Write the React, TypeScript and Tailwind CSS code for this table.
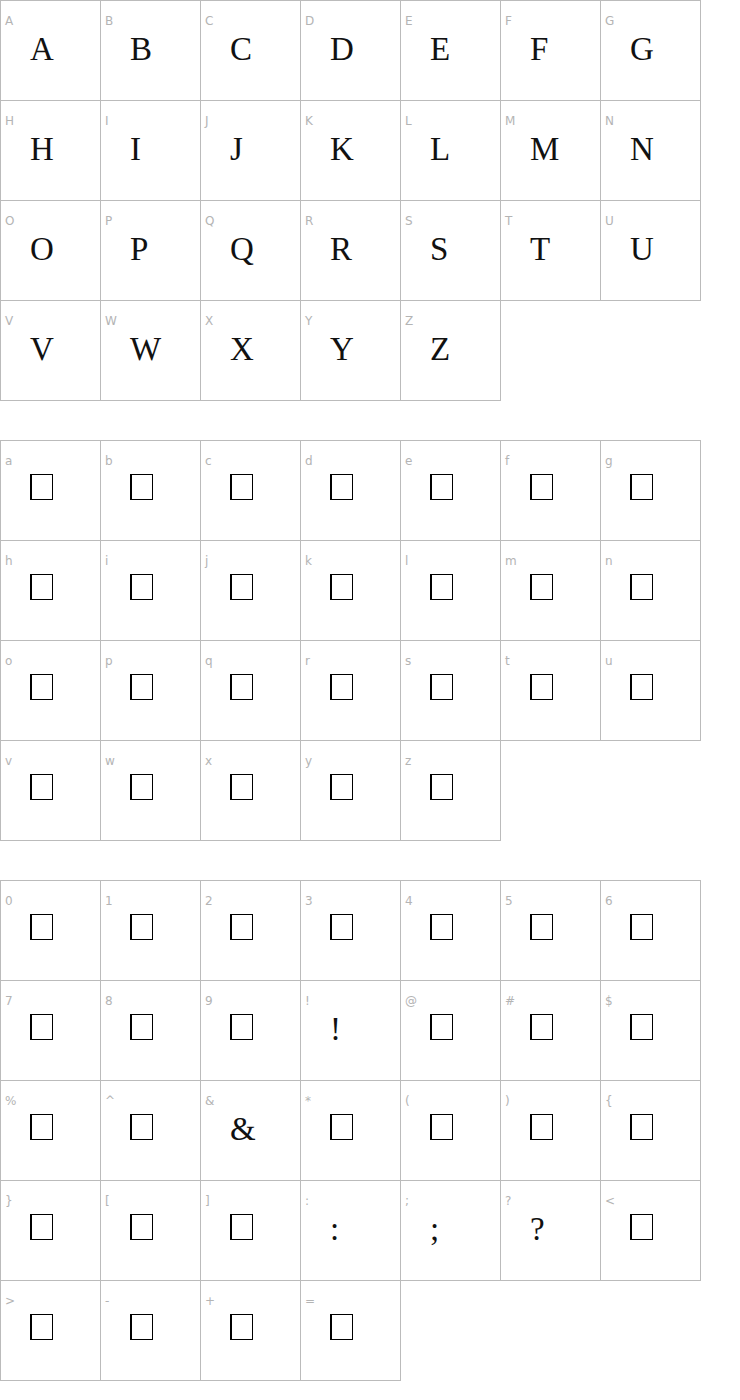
const upper = 'ABCDEFGHIJKLMNOPQRSTUVWXYZ'.split('')
const lower = 'abcdefghijklmnopqrstuvwxyz'.split('')
const symbols = '0123456789!@#$%^&*(){}[]:;?<>-+='.split('')

// characters the font actually has; everything else shows as a missing-glyph box
const hasGlyph = (c: string) => /[A-Z!&:;?]/.test(c)

const Cell = ({ char }: { char: string }) => {
    return (
        <div className="w-[101px] h-[101px] border border-[#bbbbbb] bg-white">
            <div className="pl-[4px] pt-[14px] text-[12px] leading-none text-[#b4b4b4] font-['DejaVu_Sans',sans-serif]">
                {char}
            </div>
            <div className="pl-[29px] mt-[6px] text-[33px] leading-none text-[#111] font-['Liberation_Serif',serif]">
                {hasGlyph(char) ? (
                    char
                ) : (
                    <span className="inline-block w-[23px] h-[26px] border border-black border-l-2 align-baseline" />
                )}
            </div>
        </div>
    )
}

const Section = ({ chars }: { chars: string[] }) => {
    return (
        <div className="grid grid-cols-[repeat(7,100px)] auto-rows-[100px] mb-[40px]">
            {chars.map((c) => (
                <Cell key={c} char={c} />
            ))}
        </div>
    )
}

export default function App() {
    return (
        <div className="w-[740px] min-h-[1400px] bg-white">
            <Section chars={upper} />
            <Section chars={lower} />
            <Section chars={symbols} />
        </div>
    )
}
